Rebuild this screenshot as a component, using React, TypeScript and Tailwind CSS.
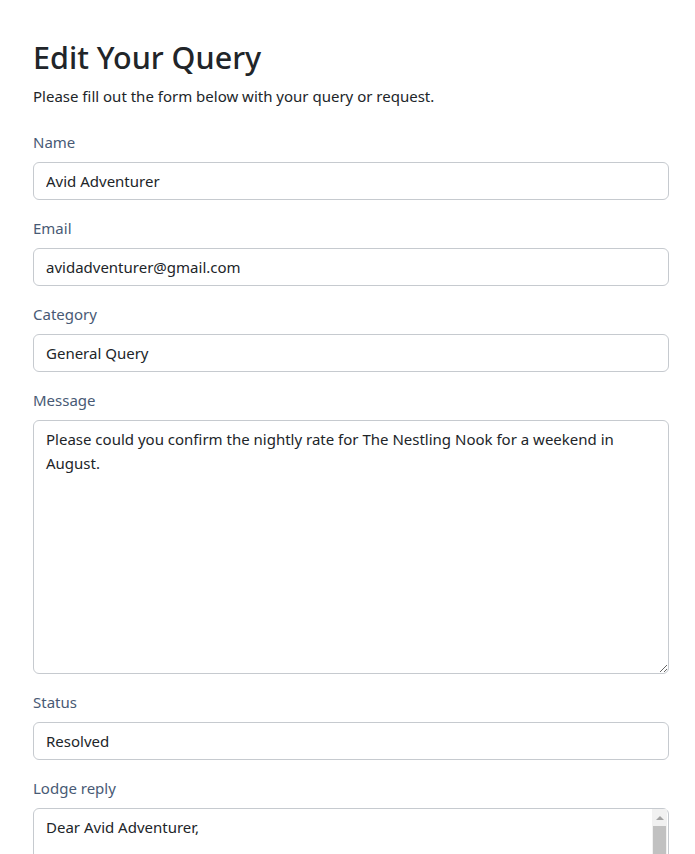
const fieldClass =
  "block w-full rounded-[6px] border border-[#c6cacf] bg-white px-3 py-[6px] text-[15px] leading-6 text-[#212529] outline-none";

function Field({ label, value }: { label: string; value: string }) {
  return (
    <div className="mb-4">
      <label className="mb-2 block text-[15px] leading-6 text-[#485a75]">{label}</label>
      <input className={fieldClass} defaultValue={value} />
    </div>
  );
}

const reply = `Dear Avid Adventurer,

Thank you for your query. The nightly rate for The Nestling Nook in August is £145 per night, with a minimum two-night stay at weekends.

Please let us know if you would like us to hold the dates for you.

Kind regards,
The Lodge Team`;

export default function App() {
  return (
    <div
      className="h-[854px] overflow-hidden bg-white pl-[33px] pr-[26px] pt-[38px] text-[#212529]"
      style={{ fontFamily: "'Noto Sans', 'Open Sans', sans-serif" }}
    >
      <h1 className="mb-2 text-[30.5px] font-medium leading-[38px]">Edit Your Query</h1>
      <p className="mb-[22px] text-[15px] leading-6">
        Please fill out the form below with your query or request.
      </p>

      <form>
        <Field label="Name" value="Avid Adventurer" />
        <Field label="Email" value="avidadventurer@gmail.com" />
        <Field label="Category" value="General Query" />

        <div className="mb-4">
          <label className="mb-2 block text-[15px] leading-6 text-[#485a75]">Message</label>
          <textarea
            className={`${fieldClass} h-[254px] resize-y`}
            defaultValue="Please could you confirm the nightly rate for The Nestling Nook for a weekend in August."
          />
        </div>

        <Field label="Status" value="Resolved" />

        <div className="mb-4">
          <label className="mb-2 block text-[15px] leading-6 text-[#485a75]">Lodge reply</label>
          <div className="relative">
            <textarea
              className={`${fieldClass} h-[254px] resize-y overflow-y-scroll pr-[28px]`}
              defaultValue={reply}
            />
            {/* scrollbar (headless hides native ones) */}
            <div className="pointer-events-none absolute bottom-[1px] right-[2px] top-[1px] flex w-[15px] flex-col items-center bg-[#f1f1f1]">
              <div className="flex h-[17px] items-center justify-center">
                <div className="h-0 w-0 border-x-[4px] border-b-[4px] border-x-transparent border-b-[#a3a3a3]" />
              </div>
              <div className="h-[120px] w-[13px] bg-[#c1c1c1]" />
            </div>
          </div>
        </div>
      </form>
    </div>
  );
}
